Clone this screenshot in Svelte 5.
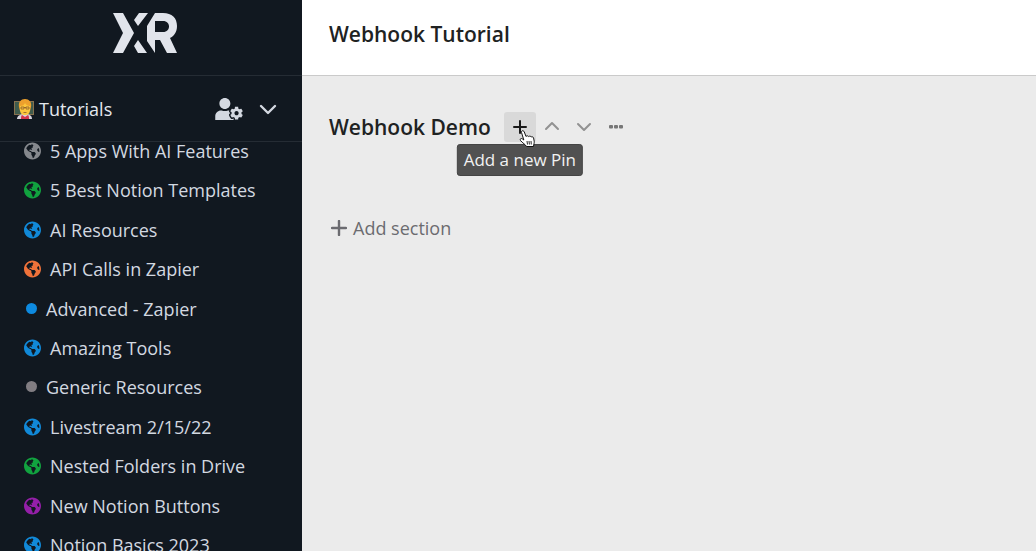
<script lang="ts">
type Page = { name: string; color: string; icon: "globe" | "dot" };

const pages: Page[] = [
  { name: "5 Apps With AI Features", color: "#85888d", icon: "globe" },
  { name: "5 Best Notion Templates", color: "#11a23f", icon: "globe" },
  { name: "AI Resources", color: "#1189d8", icon: "globe" },
  { name: "API Calls in Zapier", color: "#f0723a", icon: "globe" },
  { name: "Advanced - Zapier", color: "#0d8ae0", icon: "dot" },
  { name: "Amazing Tools", color: "#1189d8", icon: "globe" },
  { name: "Generic Resources", color: "#817d82", icon: "dot" },
  { name: "Livestream 2/15/22", color: "#1189d8", icon: "globe" },
  { name: "Nested Folders in Drive", color: "#11a23f", icon: "globe" },
  { name: "New Notion Buttons", color: "#941fa8", icon: "globe" },
  { name: "Notion Basics 2023", color: "#1189d8", icon: "globe" },
];
</script>

<div class="app">
  <aside class="sidebar">
    <a class="brand" href="#home" aria-label="Home">
      <svg width="64" height="40" viewBox="0 0 64 40" aria-hidden="true">
        <path d="M0 0h10l11 20-11 20H0l10-20zM26 0h9L25 13l-4-6zM25 27l9 13h-9l-4-7z" />
        <path
          fill-rule="evenodd"
          d="M42 0h8c9 0 14 5 14 13 0 6-3 10-7 12l7 15H54l-7-13h-5v13l-8-12V13zM42 8v11h8c8 0 8-11 0-11z"
        />
      </svg>
    </a>

    <div class="folder">
      <svg width="20" height="20" viewBox="0 0 20 20" aria-hidden="true">
        <path fill="#87714f" d="M0 2h20v14H0z" />
        <path fill="#3f5b4c" d="M1 3h18v12H1z" />
        <path fill="#d8d3dc" d="M3 20c0-3 3-5 8-5s7 2 7 5z" />
        <path fill="#d4364b" d="M7 20c0-2 0-3 1-4l3 2 3-2c1 1 1 2 1 4z" />
        <path fill="#eda02d" d="M5 8c-1-5 2-8 6-8s7 3 6 8l-1 4H6z" />
        <path fill="#fcc63c" d="M6 7c3 0 4-1 5-3 1 2 3 3 5 3v4c0 3-2 5-5 5s-5-2-5-5z" />
        <path fill="none" stroke="#8a5a2b" stroke-width=".8" d="M7 8h3v2H7zM12 8h3v2h-3zM10 8.500h2M9.500 13.500h3" />
      </svg>
      <h2>Tutorials</h2>
      <button type="button" class="share" aria-label="Manage members">
        <svg width="28" height="22" viewBox="0 0 640 512" aria-hidden="true">
          <path
            d="M610.5 373.3c2.6-14.1 2.6-28.5 0-42.6l25.8-14.9c3-1.7 4.3-5.2 3.3-8.5-6.7-21.6-18.2-41.2-33.2-57.4-2.3-2.5-6-3.1-9-1.4l-25.8 14.9c-10.9-9.3-23.4-16.5-36.9-21.3v-29.8c0-3.4-2.4-6.4-5.7-7.1-22.3-5-45-4.8-66.2 0-3.3.7-5.7 3.7-5.7 7.1v29.8c-13.5 4.8-26 12-36.9 21.3l-25.8-14.9c-2.9-1.7-6.7-1.1-9 1.4-15 16.2-26.5 35.8-33.2 57.4-1 3.3.4 6.8 3.3 8.5l25.8 14.9c-2.6 14.1-2.6 28.5 0 42.6l-25.8 14.9c-3 1.7-4.3 5.2-3.3 8.5 6.7 21.6 18.2 41.1 33.2 57.4 2.3 2.5 6 3.1 9 1.4l25.8-14.9c10.9 9.3 23.4 16.5 36.9 21.3v29.8c0 3.4 2.4 6.4 5.7 7.1 22.3 5 45 4.8 66.2 0 3.3-.7 5.7-3.7 5.7-7.1v-29.8c13.5-4.8 26-12 36.9-21.3l25.8 14.9c2.9 1.7 6.7 1.1 9-1.4 15-16.2 26.5-35.8 33.2-57.4 1-3.3-.4-6.8-3.3-8.5l-25.8-14.9zM496 400.5c-26.8 0-48.5-21.8-48.5-48.5s21.8-48.5 48.5-48.5 48.5 21.8 48.5 48.5-21.7 48.5-48.5 48.5zM224 256c70.7 0 128-57.3 128-128S294.7 0 224 0 96 57.3 96 128s57.3 128 128 128zm201.2 226.5c-2.3-1.2-4.6-2.6-6.8-3.9l-7.9 4.6c-6 3.4-12.8 5.3-19.6 5.3-10.9 0-21.4-4.6-28.9-12.6-18.3-19.8-32.3-43.9-40.2-69.6-5.500-17.7 1.9-36.4 17.9-45.7l7.9-4.6c-.1-2.6-.1-5.2 0-7.8l-7.9-4.6c-16-9.2-23.4-28-17.9-45.7.9-2.9 2.2-5.8 3.2-8.7-3.8-.3-7.5-1.2-11.4-1.2h-16.7c-22.2 10.2-46.9 16-72.9 16s-50.6-5.8-72.9-16h-16.7C60.2 288 0 348.2 0 422.4V512h427.2v-29.5z"
          />
        </svg>
      </button>
      <button type="button" aria-label="Toggle folder">
        <svg class="stroke" width="18" height="12" viewBox="0 0 18 12" aria-hidden="true">
          <path d="M2 3l7 7 7-7" stroke-width="2.4" />
        </svg>
      </button>
    </div>

    <nav aria-label="Tutorials">
      <ul>
        {#each pages as page}
          <li>
            <a href="#page">
              {#if page.icon === "globe"}
                <svg width="17" height="18" viewBox="0 0 496 512" fill={page.color} aria-hidden="true">
                  <path
                    d="M248 8C111.03 8 0 119.03 0 256s111.03 248 248 248 248-111.03 248-248S384.97 8 248 8zm82.29 357.6c-3.9 3.88-7.99 7.95-11.31 11.28-2.99 3-5.1 6.7-6.17 10.71-1.51 5.66-2.73 11.38-4.77 16.87l-17.39 46.85c-13.76 3-28 4.69-42.65 4.69v-27.38c1.69-12.62-7.64-36.26-22.63-51.25-6-6-9.37-14.14-9.37-22.63v-32.01c0-11.64-6.27-22.34-16.46-27.97-14.37-7.95-34.81-19.06-48.81-26.11-11.48-5.78-22.1-13.14-31.65-21.75l-.8-.72a114.792 114.792 0 0 1-18.06-20.74c-9.38-13.77-24.66-36.42-34.59-51.14 20.47-45.5 57.36-82.04 103.2-101.89l24.01 12.01C203.48 89.74 216 82.01 216 70.11v-11.3c7.99-1.29 16.12-2.11 24.39-2.42l28.3 28.3c6.25 6.25 6.25 16.38 0 22.63L264 112l-10.34 10.34c-3.12 3.12-3.12 8.19 0 11.31l4.69 4.69c3.12 3.12 3.12 8.19 0 11.31l-8 8a8.008 8.008 0 0 1-5.66 2.34h-8.99c-2.08 0-4.08.81-5.58 2.27l-9.92 9.65a8.008 8.008 0 0 0-1.58 9.31l15.59 31.19c2.66 5.32-1.21 11.58-7.15 11.58h-5.64c-1.93 0-3.79-.7-5.24-1.96l-9.28-8.06a16.017 16.017 0 0 0-15.55-3.1l-31.17 10.39a11.95 11.95 0 0 0-8.17 11.34c0 4.53 2.56 8.66 6.61 10.69l11.08 5.54c9.41 4.71 19.79 7.16 30.31 7.16s22.59 27.29 32 32h66.75c8.49 0 16.62 3.37 22.63 9.37l13.69 13.69a30.503 30.503 0 0 1 8.93 21.57 46.536 46.536 0 0 1-13.72 32.98zM417 274.25c-5.79-1.45-10.84-5-14.15-9.97l-17.98-26.97a23.97 23.97 0 0 1 0-26.62l19.59-29.38c2.32-3.47 5.5-6.29 9.24-8.15l12.98-6.49C440.2 193.59 448 223.87 448 256c0 8.67-.74 17.16-1.82 25.54L417 274.25z"
                  />
                </svg>
              {:else}
                <svg width="13" height="18" viewBox="0 0 13 18" fill={page.color} aria-hidden="true">
                  <circle cx="7.5" cy="8.5" r="5.5" />
                </svg>
              {/if}
              <span>{page.name}</span>
            </a>
          </li>
        {/each}
      </ul>
    </nav>
  </aside>

  <div class="content">
    <header>
      <h1>Webhook Tutorial</h1>
    </header>

    <main>
      <section>
        <h2>Webhook Demo</h2>
        <div class="add-pin">
          <button type="button" class="tool active" aria-label="Add a new Pin" aria-describedby="pin-tip">
            <svg class="stroke" width="14" height="14" viewBox="0 0 14 14" aria-hidden="true">
              <path d="M7 1v12M1 7h12" stroke-width="2" />
            </svg>
          </button>
          <div class="tooltip" id="pin-tip" role="tooltip">Add a new Pin</div>
          <svg class="pointer" width="16" height="18" viewBox="0 0 16 18" aria-hidden="true">
            <path
              fill="#fff"
              stroke="#111"
              stroke-linejoin="round"
              d="M2.500 2.500C2 .5 4.500 0 5.300 2l1.700 4.500c.8-1 2.200-.9 2.700.1.900-.8 2-.6 2.500.4 1-.6 2.100 0 2.400 1l.6 3.200c.3 1.500-.5 3-.7 5.300H7.500C6.500 14.500 3.500 13 1.500 10.500c-1-1.500.7-2.700 2-1.500l1.300 1z"
            />
            <path fill="none" stroke="#111" stroke-width=".9" d="M8 11l.5 3.500M10 11l.4 3.500M12 11l.3 3.500" />
          </svg>
        </div>
        <button type="button" class="tool" aria-label="Move section up">
          <svg class="stroke" width="16" height="12" viewBox="0 0 16 12" aria-hidden="true">
            <path d="M2 8l6-6 6 6" stroke-width="2" />
          </svg>
        </button>
        <button type="button" class="tool" aria-label="Move section down">
          <svg class="stroke" width="16" height="12" viewBox="0 0 16 12" aria-hidden="true">
            <path d="M2 3l6 6 6-6" stroke-width="2" />
          </svg>
        </button>
        <button type="button" class="tool more" aria-label="More actions">
          <svg width="14" height="4" viewBox="0 0 14 4" aria-hidden="true">
            <rect width="4" height="3.500" rx="1" />
            <rect x="5" width="4" height="3.500" rx="1" />
            <rect x="10" width="4" height="3.500" rx="1" />
          </svg>
        </button>
      </section>

      <button type="button" class="add-section">
        <svg class="stroke" width="16" height="16" viewBox="0 0 16 16" aria-hidden="true">
          <path d="M8 1v14M1 8h14" stroke-width="2.4" />
        </svg>
        Add section
      </button>
    </main>
  </div>
</div>

<style>
:global(body) {
  margin: 0;
}

.app {
  display: flex;
  height: 100vh;
  overflow: hidden;
  font-family: "Open Sans", "Noto Sans", sans-serif;
  font-size: 18px;
  line-height: 24px;
}

h1,
h2 {
  margin: 0;
  font-size: inherit;
}

svg {
  display: block;
  flex-shrink: 0;
}

button {
  display: flex;
  align-items: center;
  justify-content: center;
  padding: 0;
  border: 0;
  background: none;
  color: inherit;
  font: inherit;
  fill: currentColor;
  cursor: pointer;
}

.stroke {
  fill: none;
  stroke: currentColor;
  stroke-linecap: round;
  stroke-linejoin: round;
}

.sidebar {
  display: flex;
  flex-direction: column;
  flex: 0 0 302px;
  background: #111820;
  color: #d3d8e0;
}

.brand {
  display: flex;
  justify-content: center;
  padding: 13px 12px 22px 0;
  border-bottom: 1px solid #252c34;
  fill: #e1e4eb;
}

.folder {
  display: flex;
  align-items: center;
  padding: 21px 25px 20px 14px;
  border-bottom: 1px solid #252c34;
}
.folder h2 {
  flex: 1;
  margin-left: 5px;
  font-weight: 400;
  color: #e4e8ee;
}
.share {
  margin-right: 16px;
}

nav {
  display: flex;
  flex: 1;
  min-height: 0;
  margin-bottom: -3px;
}

ul {
  display: flex;
  flex-direction: column;
  justify-content: space-between;
  flex: 1;
  margin: 0;
  padding: 0 24px;
  list-style: none;
}

li a {
  display: flex;
  align-items: center;
  gap: 9px;
  height: 18px;
  color: inherit;
  text-decoration: none;
  white-space: nowrap;
}

.content {
  flex: 1;
  min-width: 0;
  background: #ebebeb;
  color: #202222;
}

header {
  padding: 22px 27px 29px;
  border-bottom: 1px solid #cacaca;
  background: #fff;
}

h1,
section h2 {
  font-size: 21px;
  font-weight: 600;
}

main {
  padding: 36px 27px;
}

section {
  display: flex;
  align-items: center;
  margin-bottom: 74px;
}
section h2 {
  margin-right: 13px;
}

.tool {
  width: 32px;
  height: 30px;
  border-radius: 3px;
  color: #929292;
}
.tool.active {
  background: #d9d9d9;
  color: #181818;
}
.more {
  color: #777;
}

.add-pin {
  position: relative;
}

.tooltip {
  position: absolute;
  top: 32px;
  left: 50%;
  padding: 3px 6px;
  border: 1px solid #444;
  border-radius: 3px;
  background: #515151;
  color: #f2f2f2;
  font-size: 17px;
  white-space: nowrap;
  transform: translateX(-50%);
}

.pointer {
  position: absolute;
  top: 18px;
  left: 15px;
}

.add-section {
  gap: 6px;
  padding-left: 2px;
  color: #6b6b70;
}
</style>
